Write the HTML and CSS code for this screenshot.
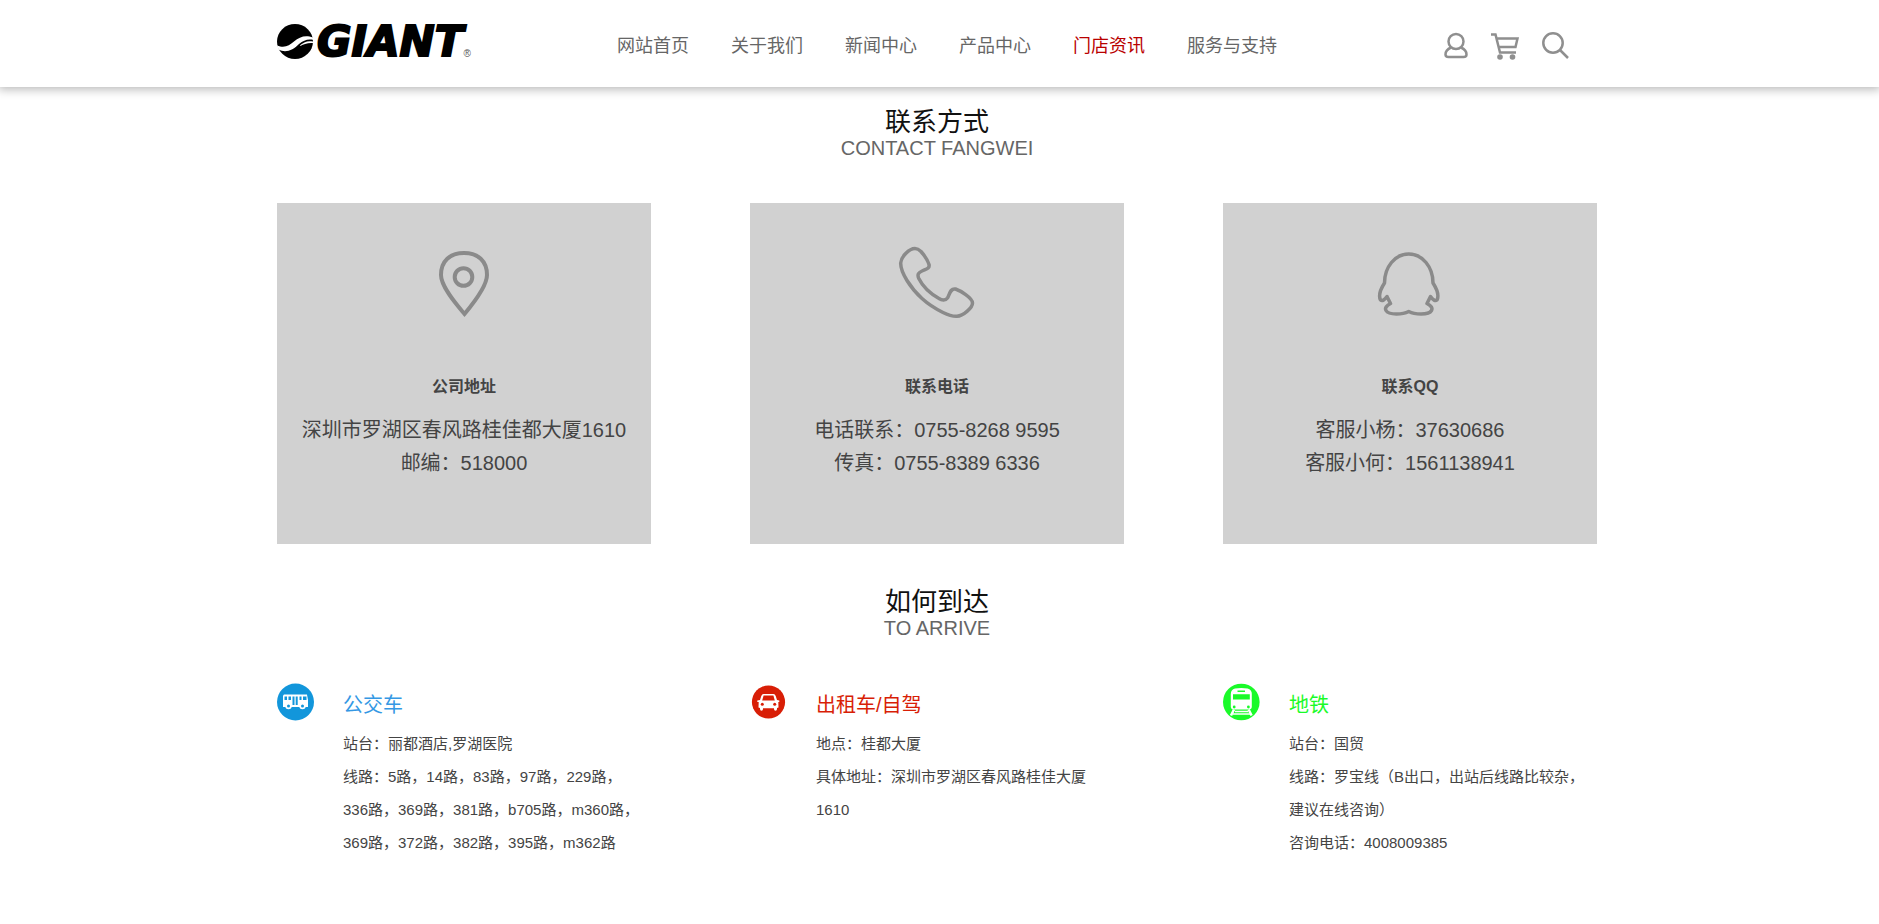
FILE: index.html
```html
<!DOCTYPE html>
<html lang="zh-CN">
<head>
<meta charset="utf-8">
<meta name="viewport" content="width=device-width, initial-scale=1">
<title>门店资讯</title>
<link rel="stylesheet" href="styles.css">
</head>
<body>
<header class="site-header">
  <div class="container header-row">
    <a class="logo" href="#">
      <svg class="logo-mark" viewBox="0 0 36 35" aria-hidden="true">
        <ellipse cx="18" cy="17.500" rx="18" ry="17.500" fill="#000"/>
        <path d="M0 21.500C8 24.500 12 21.500 17 17.500C23 12.500 29 10.500 37 14L37 16C31 14.500 27 16 22 20C16 26 9 29.500 1.500 25.500Z" fill="#fff"/>
        <path d="M22 22C27 17.500 31 16.500 36 17.500L36 19C31 18.500 27 20 22 22Z" fill="#fff"/>
      </svg>
      <span class="logo-name">GIANT</span><span class="logo-reg">®</span>
    </a>
    <nav class="main-nav">
      <a href="#">网站首页</a>
      <a href="#">关于我们</a>
      <a href="#">新闻中心</a>
      <a href="#">产品中心</a>
      <a class="active" href="#">门店资讯</a>
      <a href="#">服务与支持</a>
    </nav>
    <div class="tools">
      <button type="button" aria-label="用户">
        <svg width="24" height="28" viewBox="0 0 24 28"><circle cx="12" cy="9.500" r="7.500"/><path d="M7 15.500C3.500 17 1.500 20 1.500 22.500Q1.500 25 4.500 25H19.500Q22.500 25 22.500 22.500C22.500 20 20.500 17 17 15.500"/></svg>
      </button>
      <button type="button" aria-label="购物车">
        <svg width="28" height="28" viewBox="0 0 28 28"><path d="M0 2.500H4.500L9 20.500H25M6 6.500H26.500L24.500 15H8"/><circle class="dot" cx="9" cy="25" r="2.800"/><circle class="dot" cx="21.500" cy="25" r="2.800"/></svg>
      </button>
      <button type="button" aria-label="搜索">
        <svg width="28" height="28" viewBox="0 0 28 28"><circle cx="11" cy="11" r="9.700"/><path d="M18 18L26 26"/></svg>
      </button>
    </div>
  </div>
</header>

<main class="page">
  <div class="container">
    <section>
      <div class="heading">
        <h2>联系方式</h2>
        <p>CONTACT FANGWEI</p>
      </div>
      <div class="cards">
        <article class="card">
          <svg class="card-icon" viewBox="0 0 80 80" aria-hidden="true">
            <path d="M40.500 70C33 61 17 43 17 31C17 17 26 9 40 9C54 9 63 17 63 31C63 43 48 61 40.500 70Z"/>
            <circle cx="39.500" cy="33" r="8.800"/>
          </svg>
          <h3>公司地址</h3>
          <p>深圳市罗湖区春风路桂佳都大厦1610</p>
          <p>邮编：518000</p>
        </article>
        <article class="card">
          <svg class="card-icon thin" viewBox="0 0 80 80" aria-hidden="true">
            <path d="M18 4.500C12 4.500 4 13 3.700 19C3.500 25 7 31.500 10 36.500C14 43 19 49 25 54.500C31 60 39 65 46 68.500C51 71 56 72.500 60 72.300C66 72 75.500 64 75.500 59C75.500 54 63 46.500 58.500 45C53 44 52.500 51 50.500 54C48.500 56.500 45 56.500 42 54.500C34 50 25.500 42 21.800 34.500C20 30.500 21.500 28.500 25 27C29 25 33 24.500 32 20.500C31 17 27 11 24 7.500C22 5.500 20 4.500 18 4.500Z"/>
          </svg>
          <h3>联系电话</h3>
          <p>电话联系：0755-8268 9595</p>
          <p>传真：0755-8389 6336</p>
        </article>
        <article class="card">
          <svg class="card-icon thin" viewBox="0 0 80 80" aria-hidden="true">
            <path d="M38.700 10C25 10 14.500 23 14.500 39C10 46 8.500 52 10.500 56Q13 58 17 52.500L20.500 59.500Q14 63 16 66.500C19 71.500 33 70.500 38.700 67.500C44.500 70.500 58.500 71.500 61.500 66.500Q63.500 63 57 59.500L60.500 52.500Q64.500 58 67 56C69 52 67.500 46 63 39C63 23 52.500 10 38.700 10Z"/>
          </svg>
          <h3>联系QQ</h3>
          <p>客服小杨：37630686</p>
          <p>客服小何：1561138941</p>
        </article>
      </div>
    </section>

    <section>
      <div class="heading">
        <h2>如何到达</h2>
        <p>TO ARRIVE</p>
      </div>
      <div class="routes">
        <article class="route bus">
          <svg class="route-icon" viewBox="0 0 38 38" aria-hidden="true">
            <circle cx="18.500" cy="19" r="18.500" fill="#1296db"/>
            <path d="M7 11.500H30L31 17V24H6V12.500Z" fill="#fff"/>
            <path d="M7.500 13.500H10V17H7.500ZM11.500 13.500H14V17H11.500ZM15.500 13.500H17.500V22H15.500ZM18.700 13.500H20.700V22H18.700ZM22.500 13.500H24.500V17H22.500ZM26 13.500H29.500V17H26Z" fill="#1296db"/>
            <circle cx="11.500" cy="23" r="3.200" fill="#fff"/><circle cx="25.500" cy="23" r="3.200" fill="#fff"/>
            <circle cx="11.500" cy="23" r="1.500" fill="#1296db"/><circle cx="25.500" cy="23" r="1.500" fill="#1296db"/>
          </svg>
          <div class="route-body">
            <h3>公交车</h3>
            <p>站台：丽都酒店,罗湖医院</p>
            <p>线路：5路，14路，83路，97路，229路，336路，369路，381路，b705路，m360路，369路，372路，382路，395路，m362路</p>
          </div>
        </article>
        <article class="route taxi">
          <svg class="route-icon" viewBox="0 0 38 38" aria-hidden="true">
            <circle cx="18.500" cy="19" r="16.600" fill="#d81e06"/>
            <path d="M13.500 11H23.500Q25 11 25.700 13L27 17L29.300 17.500V19H28.300L28.500 24.500L27 25V26Q27 27.800 25.500 27.800Q24 27.800 24 26V25.200H13V26Q13 27.800 11.500 27.800Q10 27.800 10 26V25L8.500 24.500L8.700 19H7.300V17.500L10 17L11.300 13Q12 11 13.500 11Z" fill="#fff"/>
            <path d="M13.600 12.600H23.400L24.800 17.500H12.200Z" fill="#d81e06"/>
            <circle cx="12.300" cy="21.300" r="1.500" fill="#d81e06"/><circle cx="24.700" cy="21.300" r="1.500" fill="#d81e06"/>
          </svg>
          <div class="route-body">
            <h3>出租车/自驾</h3>
            <p>地点：桂都大厦</p>
            <p>具体地址：深圳市罗湖区春风路桂佳大厦1610</p>
          </div>
        </article>
        <article class="route metro">
          <svg class="route-icon" viewBox="0 0 38 38" aria-hidden="true">
            <circle cx="18.300" cy="19" r="18.300" fill="#1afa29"/>
            <path d="M12 5.500Q18.300 4.500 24.600 5.500Q28.800 6.500 28.800 11V23.500Q28.800 26.500 26 26.500H10.600Q7.800 26.500 7.800 23.500V11Q7.800 6.500 12 5.500Z" fill="#fff"/>
            <path d="M14.500 7.500H22V9H14.500ZM10 11.200H26.800V16.500H10Z" fill="#1afa29"/>
            <circle cx="11.200" cy="24" r="1.400" fill="#1afa29"/><circle cx="25.400" cy="24" r="1.400" fill="#1afa29"/>
            <path d="M11 26.500L8 32.500M25.600 26.500L28.600 32.500" stroke="#fff" stroke-width="2.500"/>
            <path d="M12 28.500H25M10 31H27" stroke="#fff" stroke-width="1.500"/>
          </svg>
          <div class="route-body">
            <h3>地铁</h3>
            <p>站台：国贸</p>
            <p>线路：罗宝线（B出口，出站后线路比较杂，建议在线咨询）</p>
            <p>咨询电话：4008009385</p>
          </div>
        </article>
      </div>
    </section>
  </div>
</main>
</body>
</html>
```

FILE: styles.css
```css
* {
  box-sizing: border-box;
}

body,
h2,
h3,
p {
  margin: 0;
}

body {
  background: #fff;
  color: #444;
  font-family: "Liberation Sans", "Noto Sans CJK SC", sans-serif;
}

a {
  color: inherit;
  text-decoration: none;
}

.site-header,
.page {
  padding-right: 5px;
}

.container {
  max-width: 1320px;
  margin: 0 auto;
}

.site-header {
  background: #fff;
  box-shadow: 0 0 10px 2px rgba(0, 0, 0, 0.3);
}

.header-row {
  display: flex;
  align-items: center;
  height: 87px;
  padding: 4px 27px 0 0;
}

.logo {
  display: flex;
  align-items: center;
  flex: 0 0 340px;
  margin-bottom: 8px;
  color: #000;
}

.logo-mark {
  width: 36px;
  height: 35px;
  margin-right: 4px;
}

.logo-name {
  font: italic bold 42px/44px "DejaVu Sans", sans-serif;
  -webkit-text-stroke: 2px #000;
}

.logo-reg {
  align-self: flex-end;
  color: #555;
  font-size: 10px;
  line-height: 20px;
}

.main-nav {
  display: flex;
  gap: 42px;
  color: #666;
  font-size: 18px;
  line-height: 28px;
  white-space: nowrap;
}

.main-nav .active {
  color: #b90000;
}

.tools {
  display: flex;
  align-items: center;
  gap: 23px;
  margin-left: auto;
}

.tools button {
  display: flex;
  padding: 0;
  border: 0;
  background: none;
  cursor: pointer;
}

.tools svg {
  fill: none;
  stroke: #8f8f8f;
  stroke-width: 2.5;
}

.tools .dot {
  fill: #8f8f8f;
  stroke: none;
}

.heading {
  padding: 21px 0 43px;
  text-align: center;
}

.heading h2 {
  color: #111;
  font-size: 26px;
  font-weight: 400;
  line-height: 28px;
}

.heading p {
  color: #666;
  font-size: 20px;
  line-height: 24px;
}

section + section .heading {
  padding-top: 44px;
}

.cards,
.routes {
  display: grid;
  grid-template-columns: repeat(3, 1fr);
  gap: 99px;
}

.card {
  padding: 41px 16px 64px;
  background: #d1d1d1;
  text-align: center;
}

.card-icon {
  display: block;
  width: 80px;
  height: 80px;
  margin: 0 auto 53px;
  fill: none;
  stroke: #8a8a8a;
  stroke-width: 4;
}

.card-icon.thin {
  stroke-width: 3.5;
  stroke-linejoin: round;
}

.card h3 {
  margin-bottom: 17px;
  font-size: 16px;
  line-height: 20px;
}

.card p {
  font-size: 20px;
  line-height: 33px;
}

.route {
  display: flex;
  gap: 28px;
}

.route-icon {
  flex: none;
  width: 38px;
  height: 38px;
}

.route-body {
  width: 300px;
}

.route-body h3 {
  margin: 6px 0;
  font-size: 20px;
  font-weight: 400;
  line-height: 32px;
}

.route-body p {
  font-size: 15px;
  line-height: 33px;
}

.bus h3 {
  color: #3498e4;
}

.taxi h3 {
  color: #d81e06;
}

.metro h3 {
  color: #1afa29;
}
```
